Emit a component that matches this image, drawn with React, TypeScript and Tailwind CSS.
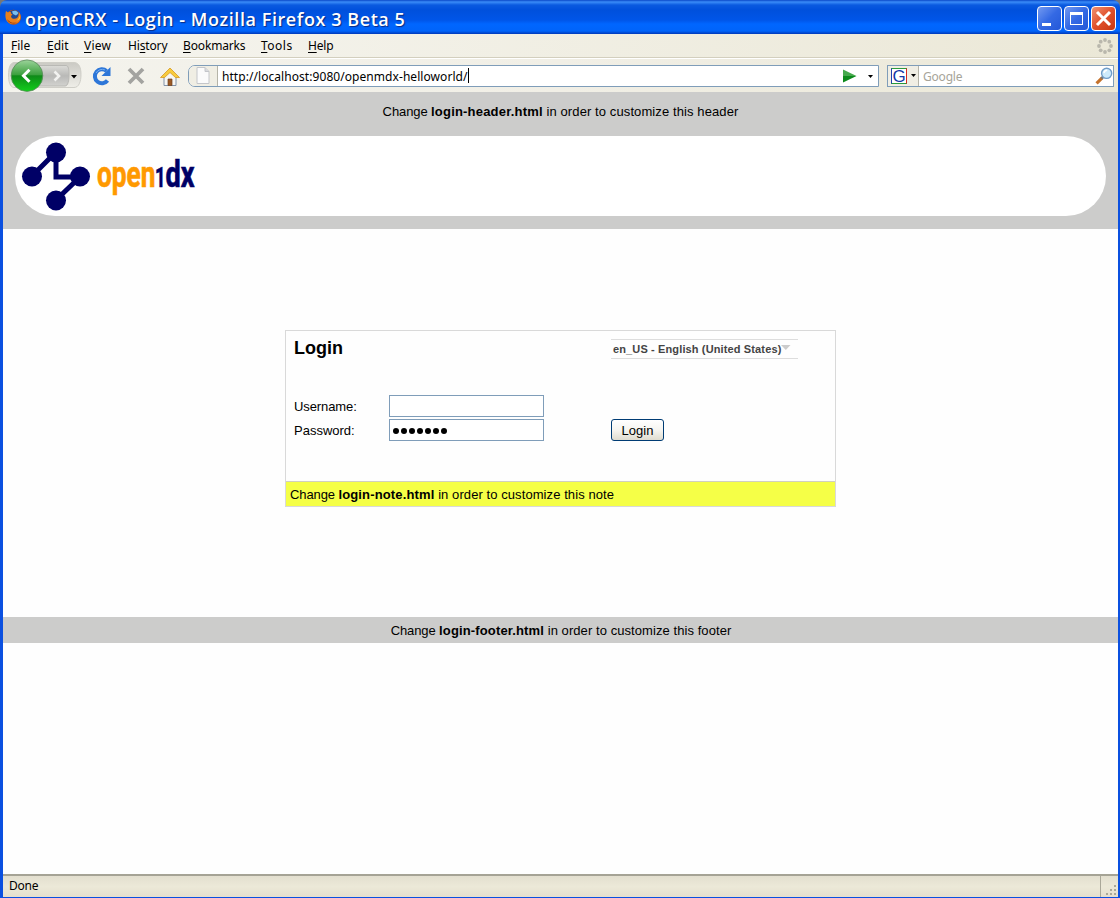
import type { ReactNode } from 'react';

const UI = "font-['Noto_Sans',sans-serif]";

function FirefoxIcon() {
  return (
    <svg width="17" height="17" viewBox="0 0 17 17">
      <circle cx="8.5" cy="8.3" r="7.5" fill="#c4500a" />
      <circle cx="9" cy="6.500" r="5.600" fill="#1f4b94" />
      <path d="M7 2.500c2-1.500 5-1 6 1 .5 1.500-1 2-2 3L8 5z" fill="#79c0ee" />
      <path d="M1 2l2 1.500C5 2 6.500 3 6 4.500l1.500 1L6 7c0 3 4 3.500 6 2 1.500-1.500 2-4 1.500-6 2.500 2 3 6 1 9-2.500 3.500-8 4-11 1.500C0 11 0 6 1 2z" fill="#e8801c" />
      <path d="M14.500 5c.5 3-1 5.500-3 6.300 1 .2 3-.5 3.500-2.300z" fill="#f9cf3c" />
      <path d="M2 10c1.500 4 6 6 10 3.500-4 1-7.500 0-10-3.500z" fill="#8c2f08" />
    </svg>
  );
}

function CaptionButton({ close, children }: { close?: boolean; children: ReactNode }) {
  return (
    <div
      className={
        close
          ? 'flex h-[25px] w-[25px] items-center justify-center rounded-[4px] border border-white bg-linear-to-br from-[#f0906f] via-[#e0502c] to-[#c8360e]'
          : 'flex h-[25px] w-[25px] items-center justify-center rounded-[4px] border border-white bg-linear-to-br from-[#7399f0] via-[#3469e4] to-[#2458d8]'
      }
    >
      {children}
    </div>
  );
}

function TitleBar() {
  return (
    <div className="flex h-[34px] shrink-0 items-center rounded-t-[7px] bg-[linear-gradient(180deg,#0a48c8_0,#3a8cf8_2px,#0a5ae0_5px,#0050dc_10px,#0055e8_20px,#0066ff_24px,#0064fa_31px,#0038b8_34px)] pl-[5px] pr-1">
      <FirefoxIcon />
      <span className="ml-[3px] mt-[4px] whitespace-nowrap font-['Open_Sans',sans-serif] text-[18px] leading-[24px] font-semibold tracking-[0.57px] text-white [text-shadow:1px_1px_1px_#0a2a80]">
        openCRX - Login - Mozilla Firefox 3 Beta 5
      </span>
      <div className="ml-auto mt-[3px] flex gap-[2px]">
        <CaptionButton>
          <svg width="23" height="23"><path d="M4 16h9v3H4z" fill="#fff" /></svg>
        </CaptionButton>
        <CaptionButton>
          <svg width="23" height="23"><path d="M5 5h13v13H5zM6 8v9h11V8z" fill="#fff" fillRule="evenodd" /></svg>
        </CaptionButton>
        <CaptionButton close>
          <svg width="23" height="23"><path d="M5 5l13 13m0-13l-13 13" stroke="#fff" strokeWidth="3" /></svg>
        </CaptionButton>
      </div>
    </div>
  );
}

function MenuItem({ k, pre = '', rest, w }: { k: string; pre?: string; rest: string; w: string }) {
  return (
    <span className={w}>
      {pre}
      <span className="underline underline-offset-2">{k}</span>
      {rest}
    </span>
  );
}

function MenuBar() {
  return (
    <div className={`flex h-6 shrink-0 items-center border-b border-[#d3cfbe] bg-linear-to-r from-[#f6f5f0] to-[#ebe8d7] pl-2 pr-[5px] text-[12px] text-black ${UI}`}>
      <MenuItem k="F" rest="ile" w="w-9" />
      <MenuItem k="E" rest="dit" w="w-[37px]" />
      <MenuItem k="V" rest="iew" w="w-11 tracking-[0.2px]" />
      <MenuItem pre="Hi" k="s" rest="tory" w="w-[55px] tracking-[-0.15px]" />
      <MenuItem k="B" rest="ookmarks" w="w-[78px] tracking-[-0.15px]" />
      <MenuItem k="T" rest="ools" w="w-[47px] tracking-[0.5px]" />
      <MenuItem k="H" rest="elp" w="w-10 tracking-[-0.2px]" />
      <svg className="ml-auto" width="16" height="16" viewBox="0 0 16 16" fill="#b9b7ac">
        <circle cx="8" cy="2" r="1.900" /><circle cx="12.300" cy="3.700" r="1.900" />
        <circle cx="14" cy="8" r="1.900" /><circle cx="12.300" cy="12.300" r="1.900" />
        <circle cx="8" cy="14" r="1.900" /><circle cx="3.700" cy="12.300" r="1.900" />
        <circle cx="2" cy="8" r="1.900" /><circle cx="3.700" cy="3.700" r="1.900" />
      </svg>
    </div>
  );
}

function NavButtons() {
  return (
    <svg width="75" height="33" viewBox="0 0 75 33">
      <defs>
        <linearGradient id="back" x1="0" y1="0" x2="0" y2="1">
          <stop offset="0" stopColor="#9bd39a" /><stop offset=".48" stopColor="#3a9f3c" />
          <stop offset=".5" stopColor="#0f8a18" /><stop offset="1" stopColor="#12cf1c" />
        </linearGradient>
        <linearGradient id="fwd" x1="0" y1="0" x2="0" y2="1">
          <stop offset="0" stopColor="#dcdcd8" /><stop offset=".5" stopColor="#b9b9b7" />
          <stop offset="1" stopColor="#d2d2cf" />
        </linearGradient>
        <linearGradient id="tray" x1="0" y1="0" x2="0" y2="1">
          <stop offset="0" stopColor="#cbcac4" /><stop offset="1" stopColor="#efeee8" />
        </linearGradient>
      </defs>
      <path d="M6 3.500h60c5 0 7 5 7 12s-2 13-7 13H6C2 28 .5 23 .5 16S2 4 6 3.500z" fill="url(#tray)" stroke="#cfcec7" />
      <path d="M30 6.500h28c2.500 0 3 4 3 9.500s-1 11-4 11H30z" fill="url(#fwd)" stroke="#b9b9b5" />
      <path d="M46.500 12.500l4.500 4.500-4.500 4.500" fill="none" stroke="#f2f2f0" strokeWidth="2.600" />
      <path d="M63 16h6l-3 3.500z" />
      <circle cx="19" cy="16.700" r="15.800" fill="url(#back)" stroke="#5a8a5c" strokeWidth=".8" />
      <path d="M21.500 10.800L15.500 16.800l6 6" fill="none" stroke="#fff" strokeWidth="3" />
    </svg>
  );
}

function Toolbar() {
  return (
    <div className={`flex h-[34px] shrink-0 items-center border-t border-white bg-linear-to-r from-[#f4f3ed] via-[#f1efe6] to-[#ebe8d7] pl-[5px] pr-1 ${UI}`}>
      <NavButtons />
      <svg className="ml-[9px]" width="20" height="20" viewBox="0 0 20 20">
        <path d="M15.500 14.500A7 7 0 1 1 14.500 5" fill="none" stroke="#2d76d8" strokeWidth="4" />
        <path d="M18.500 1v9h-9z" fill="#2d76d8" />
        <path d="M4 7a7 7 0 0 1 9-3" fill="none" stroke="#75aef0" strokeWidth="1" />
      </svg>
      <svg className="ml-[15px]" width="18" height="18" viewBox="0 0 18 18">
        <path d="M2 2l14 14m0-14l-14 14" stroke="#a3a3a0" strokeWidth="3.800" />
      </svg>
      <svg className="ml-[15px] mt-[3px]" width="20" height="20" viewBox="0 0 20 20">
        <path d="M4 10l6-6 6 6v8.500H4z" fill="#f7f7f5" stroke="#8294aa" />
        <path d="M8 12h4v6.500H8z" fill="#9c5a25" stroke="#6e4424" strokeWidth=".7" />
        <path d="M10 1l9.500 9.500h-4L10 5.500l-5.500 5h-4z" fill="#f8cc3d" stroke="#d69822" strokeWidth=".8" />
      </svg>
      <div className="ml-[8px] flex h-[22px] w-[691px] items-center rounded-l-[7px] border border-[#7f9db9] bg-white">
        <div className="flex h-full w-[29px] items-center justify-center rounded-l-[6px] border-r border-[#b5b4a8] bg-[#f0eee4]">
          <svg width="14" height="17" viewBox="0 0 14 17">
            <path d="M1 .5h8l4 4v12H1z" fill="#fbfbfb" stroke="#c4c6ca" />
            <path d="M9 .5v4h4" fill="#d8dade" stroke="#c4c6ca" />
          </svg>
        </div>
        <span className="ml-1 mt-[2px] whitespace-nowrap text-[12px] tracking-[0.06px] text-black">http://localhost:9080/openmdx-helloworld/</span>
        <span className="h-[15px] w-px bg-black" />
        <svg className="ml-auto mr-[3px]" width="33" height="14" viewBox="0 0 33 14">
          <path d="M1 .500L14.500 7H1z" fill="#45a94c" />
          <path d="M1 7h13.500L1 13.500z" fill="#0c8a1b" />
          <path d="M26 6h5l-2.500 3z" />
        </svg>
      </div>
      <div className="ml-[8px] flex h-[22px] w-[227px] items-center border border-[#7f9db9] bg-white">
        <div className="flex h-full w-[31px] items-center border-r border-[#b5b4a8] bg-[#f0eee4] pl-[3px]">
          <div className="flex h-4 w-4 items-center justify-center border border-t-[#2a9a3c] border-r-[#d82a20] border-b-[#2a9a3c] border-l-[#2040b0] bg-white pt-px font-['Liberation_Sans',sans-serif] text-[17px] leading-none text-[#1438a8]">
            G
          </div>
          <svg className="ml-[4px]" width="5" height="3"><path d="M0 0h5L2.500 3z" /></svg>
        </div>
        <span className="ml-1 mt-[2px] text-[12px] tracking-[-0.2px] text-[#a6a499]">Google</span>
        <svg className="ml-auto" width="18" height="18" viewBox="0 0 17 17">
          <path d="M7 10l-5.500 5.500" stroke="#c5722b" strokeWidth="3" />
          <path d="M8 9l-2 2" stroke="#777" strokeWidth="2.500" />
          <circle cx="11" cy="6" r="4.800" fill="#cdeafb" stroke="#6f9cc8" strokeWidth="1.300" />
          <path d="M8.500 5.500a3 3 0 0 1 3-2.500" fill="none" stroke="#fff" strokeWidth="1.500" />
        </svg>
      </div>
    </div>
  );
}

function OpenMdxLogo() {
  return (
    <svg width="194" height="79" viewBox="15 136 194 79">
      <g stroke="#000066" strokeWidth="5" fill="none">
        <path d="M32 176L56 152v25h24L56 200" />
      </g>
      <g fill="#000066">
        <circle cx="56" cy="152.500" r="10" /><circle cx="32" cy="176.500" r="10" />
        <circle cx="80" cy="176.500" r="10" /><circle cx="56" cy="200.500" r="10" />
      </g>
      <g fontFamily="Roboto, sans-serif" fontWeight="700" fontSize="37" strokeWidth=".7">
        <text x="97" y="186.500" fill="#ff9900" stroke="#ff9900" textLength="58.500" lengthAdjust="spacingAndGlyphs">open</text>
        <text x="155" y="186.500" fill="#000066" stroke="#000066" fontSize="28" textLength="10.500" lengthAdjust="spacingAndGlyphs">1</text>
        <text x="165.500" y="186.500" fill="#000066" stroke="#000066" textLength="29" lengthAdjust="spacingAndGlyphs">dx</text>
      </g>
    </svg>
  );
}

function LoginCard() {
  return (
    <div className="mx-auto mt-[101px] w-[551px] border border-[#d9d9d9]">
      <div className="flex h-[150px]">
        <div className="w-[325px] pl-2">
          <h1 className="mt-[6px] text-[18px] leading-[22px] font-bold">Login</h1>
          <div className="mt-[36px] flex h-[22px] items-center">
            <label className="w-[95px] pt-[2px] tracking-[-0.1px]">Username:</label>
            <div className="h-[22px] w-[155px] border border-[#7f9db9] bg-white" />
          </div>
          <div className="mt-[2px] flex h-[22px] items-center">
            <label className="w-[95px] pt-[2px]">Password:</label>
            <div className="flex h-[22px] w-[155px] items-center gap-[2px] border border-[#7f9db9] bg-white pl-[3px] pt-[2px]">
              {Array.from({ length: 7 }, (_, i) => (
                <span key={i} className="h-[6px] w-[6px] rounded-full bg-black" />
              ))}
            </div>
          </div>
        </div>
        <div>
          <div className="mt-2 flex h-5 w-[187px] items-center whitespace-nowrap border-y border-[#dddddd] pl-[2px] text-[11px] font-bold tracking-[0.13px] text-[#444]">
            en_US - English (United States)
            <svg className="mb-1" width="10" height="5"><path d="M0 0h9.500L4.800 5z" fill="#cccccc" /></svg>
          </div>
          <button className="mt-[60px] flex h-[22px] w-[53px] items-center justify-center rounded-[3px] border border-[#003c74] bg-linear-to-b from-white via-[#f6f5f0] to-[#dfdccf] pt-[2px]">
            Login
          </button>
        </div>
      </div>
      <div className="h-[25px] border-t border-[#d0d0c0] bg-[#f5ff47] pl-1 leading-[26px] tracking-[0.08px]">
        <span className="tracking-[-0.1px]">Change </span>
        <b className="tracking-[0.14px]">login-note.html</b> in order to customize this note
      </div>
    </div>
  );
}

export default function App() {
  return (
    <div className="flex h-[898px] w-[1120px] flex-col overflow-hidden bg-[#777]">
      <TitleBar />
      <div className="flex min-h-0 flex-1 flex-col border-r-2 border-b border-l-[3px] border-[#0b50e0]">
        <MenuBar />
        <Toolbar />
        <main className="flex min-h-0 flex-1 flex-col bg-[#fefefe] font-['Liberation_Sans',sans-serif] text-[13px] text-black">
          <header className="h-[137px] shrink-0 bg-[#cccccb] pr-3 pl-3">
            <p className="h-11 pt-[2px] text-center leading-[36px] tracking-[0.1px]">
              <span className="tracking-[-0.1px]">Change </span>
              <b className="tracking-[0.2px]">login-header.html</b> in order to customize this header
            </p>
            <div className="h-20 overflow-hidden rounded-full bg-white">
              <OpenMdxLogo />
            </div>
          </header>
          <LoginCard />
          <footer className="mt-[110px] h-[26px] shrink-0 bg-[#cccccb] pl-px text-center leading-[27px] tracking-[0.07px]">
            <span className="tracking-[-0.1px]">Change </span>
            <b className="tracking-[0.14px]">login-footer.html</b> in order to customize this footer
          </footer>
        </main>
        <div className={`flex h-[23px] shrink-0 items-center border-t-2 border-[#a5a395] bg-linear-to-b from-[#e3dfcf] via-[#ece9d8] to-[#e5dfcd] pl-[6px] text-[12px] text-black ${UI}`}>
          <span className="pb-[2px] tracking-[-0.2px]">Done</span>
          <div className="ml-auto h-full w-[18px] border-l border-[#aaa899] pt-[6px]">
            <svg width="16" height="14" viewBox="0 0 16 14" fill="#aaa898">
              <path d="M13 3h2v2h-2zM9 7h2v2H9zM13 7h2v2h-2zM5 11h2v2H5zM9 11h2v2H9zM13 11h2v2h-2z" />
            </svg>
          </div>
        </div>
      </div>
    </div>
  );
}
